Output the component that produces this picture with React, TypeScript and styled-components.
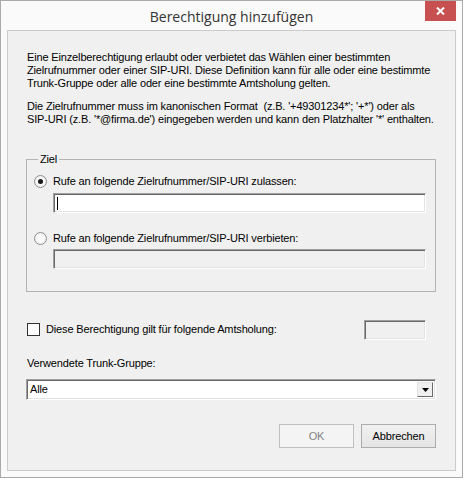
import * as React from "react";
import styled, { createGlobalStyle } from "styled-components";

const Global = createGlobalStyle`
    html, body {
        margin: 0;
        padding: 0;
        background: #ffffff;
    }
`

const Window = styled.div`
    box-sizing: border-box;
    width: 463px;
    height: 478px;
    border: 1px solid #aaaaaa;
    background: #fafafa;
    padding: 0 6px 6px 6px;
    display: flex;
    flex-direction: column;
`

const TitleBar = styled.div`
    height: 29px;
    display: grid;
    grid-template-columns: 1fr auto 1fr;
    align-items: center;
`

const Title = styled.div`
    grid-column: 2;
    font-family: "Open Sans", "Noto Sans", sans-serif;
    font-size: 14px;
    color: #333333;
    padding-top: 2px;
`

const CloseButton = styled.div`
    grid-column: 3;
    justify-self: end;
    align-self: start;
    width: 31px;
    height: 20px;
    background: #c75050;
    display: flex;
    align-items: center;
    justify-content: center;
`

const Content = styled.div`
    flex: 1;
    border: 1px solid #cccccc;
    background: #f0f0f0;
    padding: 20px 19px 0 18px;
    display: flex;
    flex-direction: column;
    font-family: "Liberation Sans", Arial, sans-serif;
    font-size: 11px;
    letter-spacing: -0.15px;
    line-height: 13px;
    color: #000000;
`

const Para = styled.div<{ $gap?: number }>`
    margin: ${p => p.$gap || 0}px 0 0 1px;
    white-space: nowrap;
`

const GroupBox = styled.fieldset`
    margin: 27px 0 0 0;
    padding: 9px 9px 22px 7px;
    border: 1px solid #b4b4b4;
    min-width: 0;
`

const Legend = styled.legend`
    padding: 0 2px;
    margin-left: 4px;
    line-height: 13px;
`

const OptionRow = styled.label<{ $gap?: number }>`
    display: flex;
    align-items: center;
    height: 13px;
    margin-top: ${p => p.$gap || 0}px;
`

const Radio = styled.span<{ $checked?: boolean }>`
    box-sizing: border-box;
    width: 13px;
    height: 13px;
    border-radius: 50%;
    border: 1px solid #8e8f8f;
    background: radial-gradient(circle, #ffffff 0%, #f4f4f4 60%, #e2e2e2 100%);
    display: flex;
    align-items: center;
    justify-content: center;
    margin-right: 6px;
    &::after {
        content: "";
        display: ${p => (p.$checked ? "block" : "none")};
        width: 5px;
        height: 5px;
        border-radius: 50%;
        background: #1a1a1a;
    }
`

const Field = styled.div<{ $disabled?: boolean; $gap?: number; $width?: number }>`
    box-sizing: border-box;
    height: 20px;
    margin-top: ${p => p.$gap || 0}px;
    margin-left: ${p => (p.$width ? 0 : 19)}px;
    width: ${p => (p.$width ? p.$width + "px" : "auto")};
    background: ${p => (p.$disabled ? "#f0f0f0" : "#ffffff")};
    border-top: 1px solid #a0a0a0;
    border-left: 1px solid #a0a0a0;
    border-right: 1px solid #ffffff;
    border-bottom: 1px solid #ffffff;
    box-shadow: inset 1px 1px 0 #696969, inset -1px -1px 0 #e3e3e3;
    display: flex;
    align-items: center;
    padding-left: 3px;
`

const Caret = styled.span`
    width: 1px;
    height: 13px;
    background: #000000;
`

const CheckRow = styled.div`
    display: flex;
    align-items: center;
    margin: 28px 10px 0 1px;
    height: 19px;
`

const CheckBox = styled.span`
    box-sizing: border-box;
    width: 13px;
    height: 13px;
    border: 1px solid #333333;
    background: #ffffff;
    margin-right: 6px;
`

const Spacer = styled.div`
    flex: 1;
`

const FieldLabel = styled.div`
    margin: 18px 0 0 1px;
`

const Select = styled.div`
    box-sizing: border-box;
    height: 21px;
    margin-top: 9px;
    background: #ffffff;
    border-top: 1px solid #a0a0a0;
    border-left: 1px solid #a0a0a0;
    border-right: 1px solid #ffffff;
    border-bottom: 1px solid #ffffff;
    box-shadow: inset 1px 1px 0 #696969, inset -1px -1px 0 #e3e3e3;
    display: flex;
    align-items: center;
    padding: 0 2px 0 3px;
`

const DropButton = styled.span`
    box-sizing: border-box;
    width: 16px;
    height: 15px;
    background: #f0f0f0;
    border-top: 1px solid #e3e3e3;
    border-left: 1px solid #e3e3e3;
    border-right: 1px solid #696969;
    border-bottom: 1px solid #696969;
    display: flex;
    align-items: center;
    justify-content: center;
`

const ButtonBar = styled.div`
    display: flex;
    justify-content: flex-end;
    gap: 7px;
    margin: 24px 0 0 0;
`

const Button = styled.div<{ $disabled?: boolean }>`
    box-sizing: border-box;
    width: 75px;
    height: 24px;
    display: flex;
    align-items: center;
    justify-content: center;
    border: 1px solid ${p => (p.$disabled ? "#bfbfbf" : "#acacac")};
    background: ${p => (p.$disabled ? "#f4f4f4" : "linear-gradient(#f0f0f0, #e5e5e5)")};
    color: ${p => (p.$disabled ? "#838383" : "#000000")};
`

export default function App() {
    return (
        <Window>
            <Global />
            <TitleBar>
                <Title>Berechtigung hinzufügen</Title>
                <CloseButton>
                    <svg width="9" height="8" viewBox="0 0 9 8">
                        <path d="M1 0.5 L8 7.5 M8 0.5 L1 7.5" stroke="#ffffff" strokeWidth="2" />
                    </svg>
                </CloseButton>
            </TitleBar>
            <Content>
                <Para>
                    Eine Einzelberechtigung erlaubt oder verbietet das Wählen einer bestimmten<br />
                    Zielrufnummer oder einer SIP-URI. Diese Definition kann für alle oder eine bestimmte<br />
                    Trunk-Gruppe oder alle oder eine bestimmte Amtsholung gelten.
                </Para>
                <Para $gap={10}>
                    Die Zielrufnummer muss im kanonischen Format&nbsp; (z.B. '+49301234*'; '+*') oder als<br />
                    SIP-URI (z.B. '*@firma.de') eingegeben werden und kann den Platzhalter '*' enthalten.
                </Para>
                <GroupBox>
                    <Legend>Ziel</Legend>
                    <OptionRow>
                        <Radio $checked />
                        Rufe an folgende Zielrufnummer/SIP-URI zulassen:
                    </OptionRow>
                    <Field $gap={5}>
                        <Caret />
                    </Field>
                    <OptionRow $gap={19}>
                        <Radio />
                        Rufe an folgende Zielrufnummer/SIP-URI verbieten:
                    </OptionRow>
                    <Field $disabled $gap={4} />
                </GroupBox>
                <CheckRow>
                    <CheckBox />
                    Diese Berechtigung gilt für folgende Amtsholung:
                    <Spacer />
                    <Field $disabled $width={62} />
                </CheckRow>
                <FieldLabel>Verwendete Trunk-Gruppe:</FieldLabel>
                <Select>
                    Alle
                    <Spacer />
                    <DropButton>
                        <svg width="7" height="4" viewBox="0 0 7 4">
                            <path d="M0 0 H7 L3.5 4 Z" fill="#000000" />
                        </svg>
                    </DropButton>
                </Select>
                <ButtonBar>
                    <Button $disabled>OK</Button>
                    <Button>Abbrechen</Button>
                </ButtonBar>
            </Content>
        </Window>
    );
}
